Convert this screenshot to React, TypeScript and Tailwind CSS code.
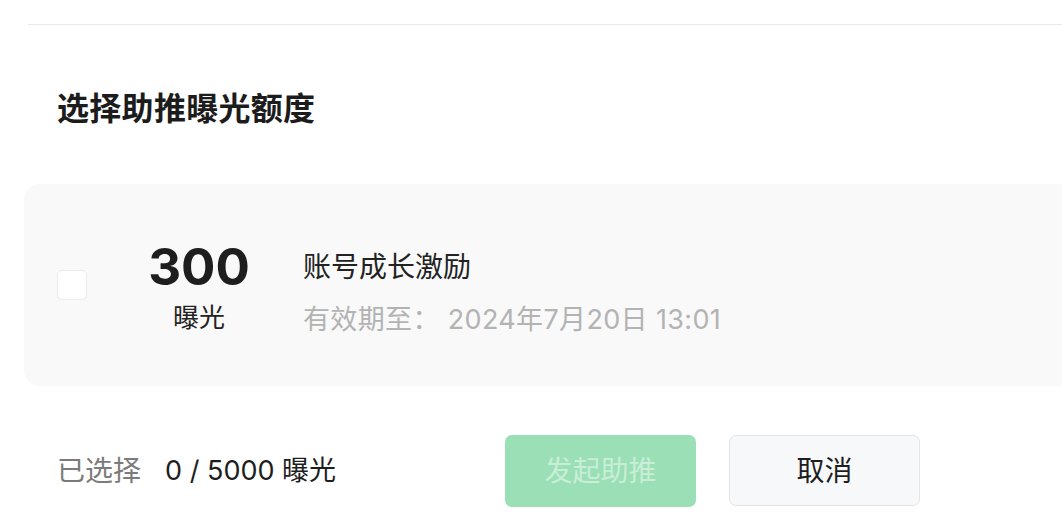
import React from 'react';

const font = { fontFamily: 'Inter, "Noto Sans CJK SC", "Noto Sans", sans-serif' };

const App: React.FC = () => (
  <div className="w-[1062px] h-[528px] bg-white overflow-hidden" style={font}>
    <div className="pt-[24px] pl-[28px]">
      <div className="h-px bg-[#e9e9e9]" />
    </div>

    <h2 className="mt-[68px] pl-[57px] text-[32px] leading-[32px] font-bold tracking-[0.3px] text-[#1c1c1c]">
      选择助推曝光额度
    </h2>

    <div className="mt-[59px] ml-[24px] h-[202px] rounded-l-[16px] bg-[#f9f9f9] flex items-center pl-[33px]">
      <div className="w-[30px] h-[30px] rounded-[5px] bg-white border border-[#ececec]" />
      <div className="ml-[57px] w-[110px] pt-[4px] flex flex-col items-center">
        <div className="text-[51px] leading-[50px] font-bold text-[#1e1e1e]">300</div>
        <div className="mt-[11px] text-[26px] leading-[30px] text-[#222]">曝光</div>
      </div>
      <div className="ml-[49px] pt-[17px] flex flex-col">
        <div className="text-[28px] leading-[30px] text-[#222]">账号成长激励</div>
        <div className="mt-[23px] text-[27px] leading-[30px] tracking-[0.35px] text-[#b3b3b3]">有效期至： 2024年7月20日 13:01</div>
      </div>
    </div>

    <div className="mt-[49px] pl-[57px] flex items-center h-[72px]">
      <span className="text-[28px] text-[#7b7b7b]">已选择</span>
      <span className="ml-[24px] text-[27px] text-[#1e1e1e]">0 / 5000 曝光</span>
      <div className="ml-auto mr-[142px] flex gap-[33px]">
        <button className="w-[191px] h-[72px] rounded-[7px] bg-[#9adfb5] text-[28px] text-[#c9eed7]">
          发起助推
        </button>
        <button className="w-[191px] h-[71px] rounded-[7px] bg-[#f7f8fa] border border-[#e2e4e7] text-[28px] text-[#1e1e1e]">
          取消
        </button>
      </div>
    </div>
  </div>
);

export default App;
